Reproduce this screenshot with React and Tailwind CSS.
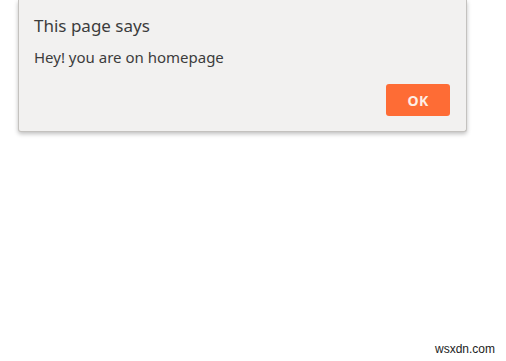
const App = () => {
  return (
    <div className="w-[506px] h-[361px] bg-white relative overflow-hidden" style={{ fontFamily: '"Noto Sans", "Open Sans", sans-serif' }}>
      {/* Alert dialog */}
      <div className="ml-[18px] w-[449px] h-[132px] bg-[#f2f1f0] border border-[#c4c2bf] border-t-0 rounded-b-[3px] shadow-[0_2px_4px_rgba(0,0,0,0.25)] flex flex-col">
        <div className="pl-[15px] pt-[14px] text-[17px] leading-[24px] text-[#3c3c3c]">
          This page says
        </div>
        <div className="pl-[15px] pt-[9px] text-[15px] leading-[20px] text-[#3c3c3c]">
          Hey! you are on homepage
        </div>
        <div className="flex-1 flex justify-end items-end pr-[16px] pb-[15px]">
          <button className="w-[64px] h-[32px] rounded-[3px] bg-[#fe6c35] text-[#fdeee6] text-[14px] font-bold tracking-wide">
            OK
          </button>
        </div>
      </div>

      {/* Watermark */}
      <div className="absolute right-[11px] bottom-[3px] text-[12px] text-[#222]" style={{ fontFamily: '"Liberation Sans", Arial, sans-serif' }}>
        wsxdn.com
      </div>
    </div>
  );
};

export default App;
